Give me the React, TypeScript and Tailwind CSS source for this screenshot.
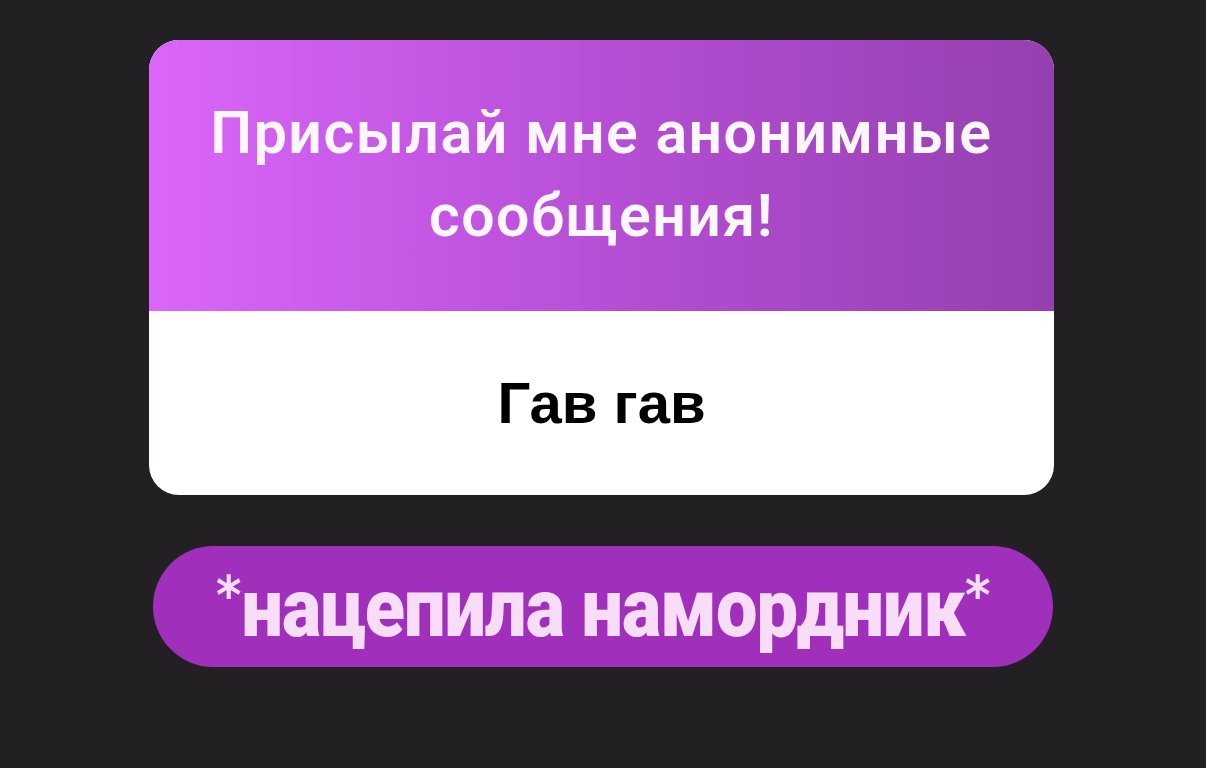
export default function App() {
  return (
    <div className="min-h-screen w-full bg-[#222023] flex flex-col items-center pt-[40px] font-['Roboto',sans-serif]">
      <div className="w-[905px] rounded-[30px] overflow-hidden bg-white ml-[-3px]">
        <div className="h-[271px] bg-gradient-to-r from-[#da66fa] via-[#b64fd6] to-[#9540b0] flex flex-col items-center justify-center pb-[4px]">
          <p className="text-[#fdf6fd] text-[59px] font-semibold leading-[83px] text-center tracking-[1.5px]">
            Присылай мне анонимные
            <br />
            сообщения!
          </p>
        </div>
        <div className="h-[184px] flex items-center justify-center pb-[2px]">
          <p className="text-black text-[58px] font-bold font-['Liberation_Sans',sans-serif]">Гав гав</p>
        </div>
      </div>
      <div className="mt-[51px] w-[900px] h-[121px] rounded-full bg-[#a030bb] flex items-center justify-center">
        <p className="inline-block whitespace-nowrap scale-x-[0.9] text-[#f8ddf8] text-[82px] font-black leading-none tracking-[-1px] pt-[2px]">
          <span className="text-[54px] align-[22px] tracking-normal font-['DejaVu_Sans',sans-serif] font-bold">*</span>
          нацепила намордник
          <span className="text-[54px] align-[22px] tracking-normal font-['DejaVu_Sans',sans-serif] font-bold">*</span>
        </p>
      </div>
    </div>
  )
}
